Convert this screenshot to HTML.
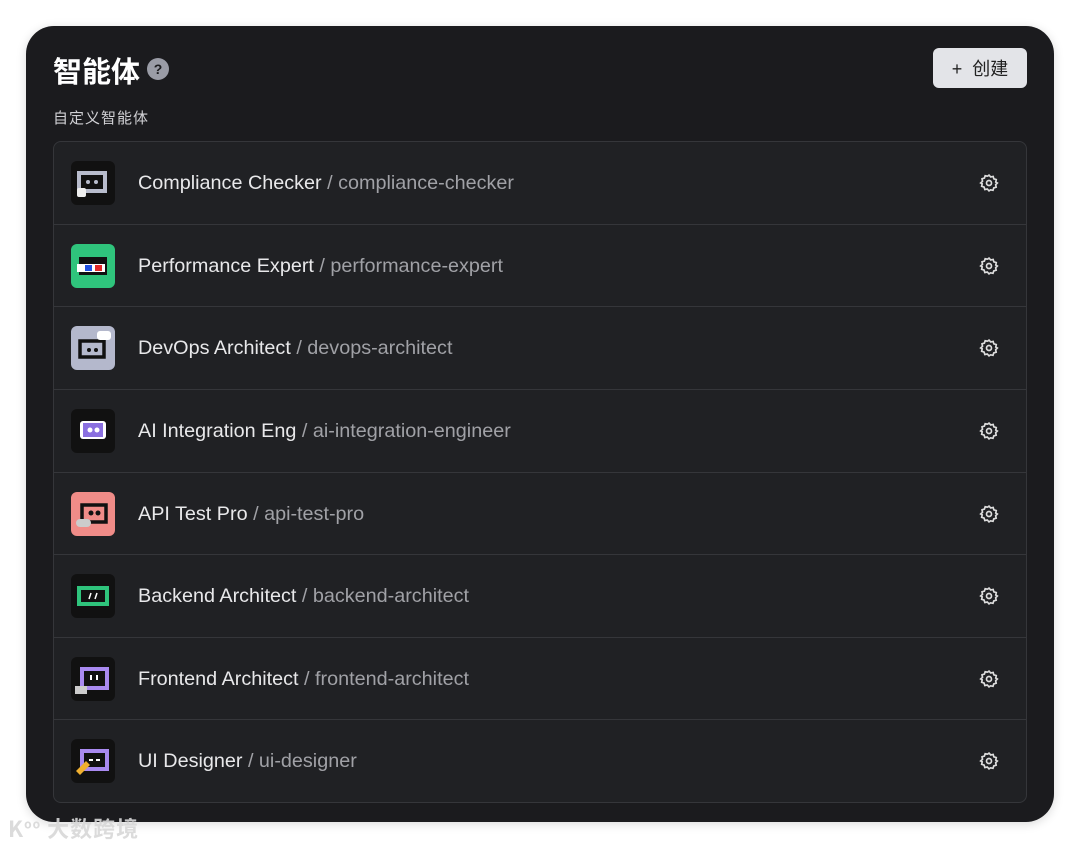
<!DOCTYPE html>
<html><head><meta charset="utf-8"><style>
*{margin:0;padding:0;box-sizing:border-box}
body{width:1080px;height:849px;background:#fff;font-family:"Liberation Sans","Noto Sans CJK SC",sans-serif;position:relative;overflow:hidden}
.card{position:absolute;left:26px;top:26px;width:1028px;height:796px;background:#1b1b1e;border-radius:28px;box-shadow:0 2px 10px rgba(0,0,0,.15)}
h1{position:absolute;left:27px;top:24px;color:#fff;font-size:29px;font-weight:bold;font-family:"Noto Sans CJK SC",sans-serif;line-height:40px}
.q{position:absolute;left:121px;top:32px;width:22px;height:22px;border-radius:50%;background:#9a9ca6;color:#1b1b1e;font-size:14px;font-weight:bold;text-align:center;line-height:22px}
.sub{position:absolute;left:27px;top:81px;color:#d0d0d4;font-size:15px;font-family:"Noto Sans CJK SC",sans-serif;letter-spacing:1px}
.btn{position:absolute;left:907px;top:22px;width:94px;height:40px;background:#e3e4e8;border-radius:6px;color:#222;font-size:18px;text-align:center;line-height:42px;font-family:"Liberation Sans","Noto Sans CJK SC",sans-serif}
.list{position:absolute;left:27px;top:115px;width:974px;height:662px;background:#202124;border:1px solid #35363a;border-radius:8px;overflow:hidden;display:flex;flex-direction:column}
.row{flex:1;border-bottom:1px solid #35363a;position:relative}
.row:last-child{border-bottom:none}
.ic{position:absolute;left:17px;top:19px;width:44px;height:44px;border-radius:6px;overflow:hidden}
.t{position:absolute;left:84px;top:30px;font-size:19.8px;color:#e8e8ea;line-height:22px}
.t span{color:#a0a1a6}
.g{position:absolute;left:925px;top:31px}
</style></head><body>
<div class="card">
<h1>智能体</h1><div class="q">?</div>
<div class="sub">自定义智能体</div>
<div class="btn">+&nbsp; 创建</div>
<div class="list">
<div class="row"><svg class="ic" viewBox="0 0 44 44"><rect width="44" height="44" fill="#111"/><rect x="8" y="12" width="26" height="18" fill="none" stroke="#b8bccc" stroke-width="4"/><circle cx="17" cy="21" r="2" fill="#b8bccc"/><circle cx="25" cy="21" r="2" fill="#b8bccc"/><rect x="6" y="27" width="9" height="9" rx="2" fill="#eee"/></svg><div class="t">Compliance Checker <span>/ compliance-checker</span></div><svg class="g" width="20" height="20" viewBox="0 0 24 24" fill="none" stroke="#ddd" stroke-width="2"><circle cx="12" cy="12" r="3"/><path d="M12 2.5l2 2.2 3-.6.8 2.9 2.9.9-.6 3L22 12l-2 2 .6 3-2.9.9-.9 2.9-3-.6L12 21.5l-2-2.3-3 .6-.9-2.9-2.9-.9.6-3L2 12l2.2-2-.6-3 2.9-.9.9-2.9 3 .6z"/></svg></div>
<div class="row"><svg class="ic" viewBox="0 0 44 44"><rect width="44" height="44" fill="#2fc47c"/><rect x="8" y="13" width="28" height="18" fill="#111"/><rect x="6" y="20" width="28" height="8" fill="#fff"/><rect x="14" y="21" width="7" height="6" fill="#2050e0"/><rect x="24" y="21" width="7" height="6" fill="#e02828"/></svg><div class="t">Performance Expert <span>/ performance-expert</span></div><svg class="g" width="20" height="20" viewBox="0 0 24 24" fill="none" stroke="#ddd" stroke-width="2"><circle cx="12" cy="12" r="3"/><path d="M12 2.5l2 2.2 3-.6.8 2.9 2.9.9-.6 3L22 12l-2 2 .6 3-2.9.9-.9 2.9-3-.6L12 21.5l-2-2.3-3 .6-.9-2.9-2.9-.9.6-3L2 12l2.2-2-.6-3 2.9-.9.9-2.9 3 .6z"/></svg></div>
<div class="row"><svg class="ic" viewBox="0 0 44 44"><rect width="44" height="44" fill="#b4b8cc"/><rect x="9" y="15" width="24" height="16" fill="none" stroke="#111" stroke-width="3.5"/><circle cx="18" cy="24" r="2" fill="#111"/><circle cx="25" cy="24" r="2" fill="#111"/><rect x="26" y="5" width="14" height="9" rx="3" fill="#fff"/></svg><div class="t">DevOps Architect <span>/ devops-architect</span></div><svg class="g" width="20" height="20" viewBox="0 0 24 24" fill="none" stroke="#ddd" stroke-width="2"><circle cx="12" cy="12" r="3"/><path d="M12 2.5l2 2.2 3-.6.8 2.9 2.9.9-.6 3L22 12l-2 2 .6 3-2.9.9-.9 2.9-3-.6L12 21.5l-2-2.3-3 .6-.9-2.9-2.9-.9.6-3L2 12l2.2-2-.6-3 2.9-.9.9-2.9 3 .6z"/></svg></div>
<div class="row"><svg class="ic" viewBox="0 0 44 44"><rect width="44" height="44" fill="#111"/><rect x="9" y="12" width="26" height="18" rx="3" fill="#fff"/><rect x="12" y="14" width="20" height="14" fill="#8a6fe0"/><circle cx="19" cy="21" r="2.5" fill="#fff"/><circle cx="26" cy="21" r="2.5" fill="#fff"/></svg><div class="t">AI Integration Eng <span>/ ai-integration-engineer</span></div><svg class="g" width="20" height="20" viewBox="0 0 24 24" fill="none" stroke="#ddd" stroke-width="2"><circle cx="12" cy="12" r="3"/><path d="M12 2.5l2 2.2 3-.6.8 2.9 2.9.9-.6 3L22 12l-2 2 .6 3-2.9.9-.9 2.9-3-.6L12 21.5l-2-2.3-3 .6-.9-2.9-2.9-.9.6-3L2 12l2.2-2-.6-3 2.9-.9.9-2.9 3 .6z"/></svg></div>
<div class="row"><svg class="ic" viewBox="0 0 44 44"><rect width="44" height="44" fill="#f08c88"/><rect x="11" y="13" width="24" height="17" fill="none" stroke="#111" stroke-width="3.5"/><circle cx="20" cy="21" r="2.5" fill="#111"/><circle cx="27" cy="21" r="2.5" fill="#111"/><rect x="5" y="27" width="15" height="8" rx="4" fill="#ccc"/></svg><div class="t">API Test Pro <span>/ api-test-pro</span></div><svg class="g" width="20" height="20" viewBox="0 0 24 24" fill="none" stroke="#ddd" stroke-width="2"><circle cx="12" cy="12" r="3"/><path d="M12 2.5l2 2.2 3-.6.8 2.9 2.9.9-.6 3L22 12l-2 2 .6 3-2.9.9-.9 2.9-3-.6L12 21.5l-2-2.3-3 .6-.9-2.9-2.9-.9.6-3L2 12l2.2-2-.6-3 2.9-.9.9-2.9 3 .6z"/></svg></div>
<div class="row"><svg class="ic" viewBox="0 0 44 44"><rect width="44" height="44" fill="#111"/><rect x="8" y="14" width="28" height="16" fill="none" stroke="#2fc47c" stroke-width="4"/><path d="M18 25l2-6M24 25l2-6" stroke="#fff" stroke-width="1.5"/></svg><div class="t">Backend Architect <span>/ backend-architect</span></div><svg class="g" width="20" height="20" viewBox="0 0 24 24" fill="none" stroke="#ddd" stroke-width="2"><circle cx="12" cy="12" r="3"/><path d="M12 2.5l2 2.2 3-.6.8 2.9 2.9.9-.6 3L22 12l-2 2 .6 3-2.9.9-.9 2.9-3-.6L12 21.5l-2-2.3-3 .6-.9-2.9-2.9-.9.6-3L2 12l2.2-2-.6-3 2.9-.9.9-2.9 3 .6z"/></svg></div>
<div class="row"><svg class="ic" viewBox="0 0 44 44"><rect width="44" height="44" fill="#111"/><rect x="11" y="12" width="25" height="19" fill="none" stroke="#a98af0" stroke-width="4"/><rect x="19" y="18" width="2" height="5" fill="#fff"/><rect x="25" y="18" width="2" height="5" fill="#fff"/><rect x="4" y="29" width="12" height="8" fill="#ccc"/></svg><div class="t">Frontend Architect <span>/ frontend-architect</span></div><svg class="g" width="20" height="20" viewBox="0 0 24 24" fill="none" stroke="#ddd" stroke-width="2"><circle cx="12" cy="12" r="3"/><path d="M12 2.5l2 2.2 3-.6.8 2.9 2.9.9-.6 3L22 12l-2 2 .6 3-2.9.9-.9 2.9-3-.6L12 21.5l-2-2.3-3 .6-.9-2.9-2.9-.9.6-3L2 12l2.2-2-.6-3 2.9-.9.9-2.9 3 .6z"/></svg></div>
<div class="row"><svg class="ic" viewBox="0 0 44 44"><rect width="44" height="44" fill="#111"/><rect x="11" y="12" width="25" height="18" fill="none" stroke="#a98af0" stroke-width="4"/><rect x="18" y="20" width="4" height="2" fill="#fff"/><rect x="25" y="20" width="4" height="2" fill="#fff"/><path d="M5 32l10-10 4 4-10 10z" fill="#f0b030"/></svg><div class="t">UI Designer <span>/ ui-designer</span></div><svg class="g" width="20" height="20" viewBox="0 0 24 24" fill="none" stroke="#ddd" stroke-width="2"><circle cx="12" cy="12" r="3"/><path d="M12 2.5l2 2.2 3-.6.8 2.9 2.9.9-.6 3L22 12l-2 2 .6 3-2.9.9-.9 2.9-3-.6L12 21.5l-2-2.3-3 .6-.9-2.9-2.9-.9.6-3L2 12l2.2-2-.6-3 2.9-.9.9-2.9 3 .6z"/></svg></div>
</div>
</div>
<div style="position:absolute;left:8px;top:812px;color:rgba(215,215,215,.9);font-size:22px;font-family:'Noto Sans CJK SC',sans-serif;font-weight:bold;letter-spacing:1px">K<sup style="font-size:12px">oo</sup> 大数跨境</div>
</body></html>
